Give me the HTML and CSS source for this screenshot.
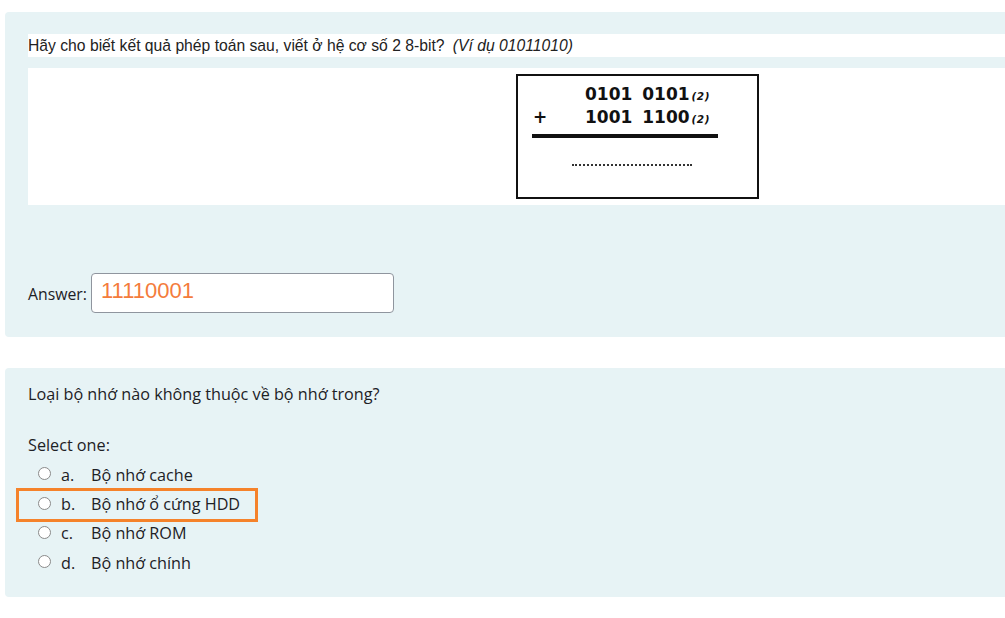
FILE: index.html
```html
<!DOCTYPE html>
<html lang="vi">
<head>
<meta charset="utf-8">
<link rel="stylesheet" href="styles.css">
</head>
<body>
<div class="page">
  <section class="panel panel-1">
    <div class="qtext">Hãy cho biết kết quả phép toán sau, viết ở hệ cơ số 2 8-bit? <em>(Ví dụ 01011010)</em></div>
    <div class="imgarea">
      <div class="calc">
        <div class="row"><span class="op"></span><span class="num">0101&nbsp;0101</span><span class="sub">(2)</span></div>
        <div class="row"><span class="op">+</span><span class="num">1001&nbsp;1100</span><span class="sub">(2)</span></div>
        <div class="rule"></div>
        <div class="dots"></div>
      </div>
    </div>
    <div class="answer">
      <span class="alabel">Answer:</span>
      <div class="ainput">11110001</div>
    </div>
  </section>

  <section class="panel panel-2">
    <div class="q2">Loại bộ nhớ nào không thuộc về bộ nhớ trong?</div>
    <div class="select">Select one:</div>
    <div class="opts">
      <div class="opt"><span class="radio"></span><span class="letter">a.</span><span>Bộ nhớ cache</span></div>
      <div class="opt marked"><span class="radio"></span><span class="letter">b.</span><span>Bộ nhớ ổ cứng HDD</span></div>
      <div class="opt"><span class="radio"></span><span class="letter">c.</span><span>Bộ nhớ ROM</span></div>
      <div class="opt"><span class="radio"></span><span class="letter">d.</span><span>Bộ nhớ chính</span></div>
    </div>
  </section>
</div>
</body>
</html>
```

FILE: styles.css
```css
html, body {
  margin: 0;
  padding: 0;
  background: #ffffff;
  overflow: hidden;
}
.page {
  width: 1005px;
  height: 618px;
  padding-top: 12px;
  box-sizing: border-box;
  overflow: hidden;
}
.panel {
  background: #e7f3f5;
  margin-left: 5px;
  width: 1020px;
  border-radius: 4px;
  box-sizing: border-box;
  padding-left: 23px;
}
.panel-1 {
  height: 325px;
  padding-top: 22px;
}
.qtext {
  background: #ffffff;
  height: 23px;
  line-height: 23px;
  font-family: "Liberation Sans", Arial, sans-serif;
  font-size: 15.7px;
  color: #222;
  white-space: nowrap;
}
.qtext em {
  margin-left: 4px;
}
.imgarea {
  background: #ffffff;
  margin-top: 11px;
  height: 137px;
  padding-top: 6px;
  padding-left: 488px;
  box-sizing: border-box;
}
.calc {
  width: 243px;
  height: 125px;
  border: 2px solid #111;
  box-sizing: border-box;
  padding-top: 8px;
  padding-left: 14px;
  font-family: "DejaVu Sans", Verdana, sans-serif;
  font-weight: bold;
  color: #111;
}
.row {
  display: flex;
  align-items: baseline;
  height: 23px;
  font-size: 17px;
}
.num {
  word-spacing: 4px;
}
.op {
  width: 52px;
  padding-left: 1px;
}
.sub {
  font-size: 10.5px;
  font-style: italic;
  margin-left: 2px;
  letter-spacing: 0.5px;
}
.rule {
  margin-top: 4px;
  width: 186px;
  height: 4px;
  background: #111;
}
.dots {
  margin: 26px 0 0 40px;
  width: 120px;
  border-top: 2px dotted #333;
}
.answer {
  margin-top: 68px;
  display: flex;
  align-items: center;
  gap: 4px;
  font-family: "Open Sans", "Noto Sans", sans-serif;
  font-size: 15.8px;
  color: #1d2125;
}
.alabel {
  margin-top: 2px;
}
.ainput {
  width: 303px;
  height: 40px;
  box-sizing: border-box;
  border: 1px solid #8f959e;
  border-radius: 4px;
  background: #fff;
  font-family: "Liberation Sans", Arial, sans-serif;
  font-size: 22px;
  color: #f47c3c;
  padding-left: 9px;
  line-height: 34px;
}
.panel-2 {
  margin-top: 31px;
  height: 229px;
  padding-top: 14px;
  font-family: "Open Sans", "Noto Sans", sans-serif;
  font-size: 16.2px;
  color: #1d2125;
}
.q2 {
  line-height: 24px;
}
.select {
  margin-top: 27px;
  line-height: 24px;
}
.opts {
  margin-top: 3px;
  padding-left: 10px;
}
.opt {
  position: relative;
  display: flex;
  align-items: center;
  height: 29.4px;
}
.radio {
  width: 11px;
  height: 11px;
  border: 1px solid #8a8a8a;
  border-radius: 50%;
  background: #fff;
  margin-right: 10px;
  margin-top: -2px;
}
.letter {
  width: 30px;
}
.marked::after {
  content: "";
  position: absolute;
  left: -22px;
  top: -1px;
  width: 242px;
  height: 34px;
  border: 3px solid #f5822a;
  box-sizing: border-box;
}
```
